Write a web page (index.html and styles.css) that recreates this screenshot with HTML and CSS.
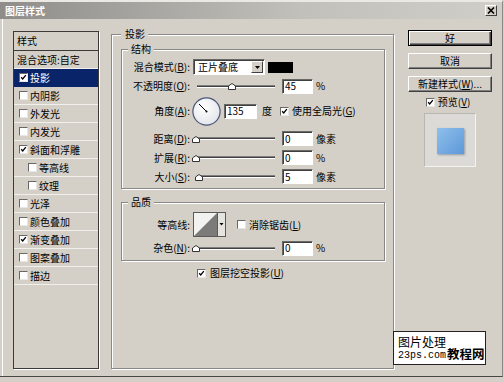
FILE: index.html
```html
<!DOCTYPE html>
<html lang="zh">

<head>
    <meta charset="UTF-8">
    <meta name="viewport" content="width=device-width, initial-scale=1.0">
    <title>图层样式</title>
    <link rel="stylesheet" href="styles.css">
</head>

<body>

    <div class="window">
        <div class="titlebar">
            <span class="title">图层样式</span>
            <span class="close">
                <svg width="8" height="7" viewBox="0 0 8 7"><path d="M1 0.5l6 6M7 0.5l-6 6" stroke="#000" stroke-width="1.6"/></svg>
            </span>
        </div>

        <div class="main">
            <div class="styles-list">
                <div class="list-head">样式</div>
                <div class="item">混合选项:自定</div>
                <div class="item check selected"><span class="cb on"><svg viewBox="0 0 9 9"><path d="M1.5 4.2l2 2.2 4-5" /></svg></span>投影</div>
                <div class="item check"><span class="cb"></span>内阴影</div>
                <div class="item check"><span class="cb"></span>外发光</div>
                <div class="item check"><span class="cb"></span>内发光</div>
                <div class="item check"><span class="cb on"><svg viewBox="0 0 9 9"><path d="M1.5 4.2l2 2.2 4-5" /></svg></span>斜面和浮雕</div>
                <div class="item check sub"><span class="cb"></span>等高线</div>
                <div class="item check sub"><span class="cb"></span>纹理</div>
                <div class="item check"><span class="cb"></span>光泽</div>
                <div class="item check"><span class="cb"></span>颜色叠加</div>
                <div class="item check"><span class="cb on"><svg viewBox="0 0 9 9"><path d="M1.5 4.2l2 2.2 4-5" /></svg></span>渐变叠加</div>
                <div class="item check"><span class="cb"></span>图案叠加</div>
                <div class="item check"><span class="cb"></span>描边</div>
            </div>

            <fieldset class="group outer">
                <legend>投影</legend>

                <fieldset class="group inner structure">
                    <legend>结构</legend>
                    <div class="row r-blend">
                        <span class="label">混合模式(<u>B</u>):</span>
                        <span class="select">正片叠底<span class="arrow"><svg width="5" height="3" viewBox="0 0 5 3"><path d="M0 0h5L2.5 3z" fill="#000"/></svg></span></span>
                        <span class="swatch"></span>
                    </div>
                    <div class="row r-opacity">
                        <span class="label">不透明度(<u>O</u>):</span>
                        <span class="slider"><span class="track"></span><svg class="thumb" style="left: 36px" width="8" height="7" viewBox="0 0 8 7"><path d="M0.5 6.5V3L4 0.5 7.5 3v3.5z" fill="#fff" stroke="#333"/></svg></span>
                        <span class="field">45</span>
                        <span class="unit">%</span>
                    </div>
                    <div class="row r-angle">
                        <span class="label">角度(<u>A</u>):</span>
                        <svg class="dial" width="29" height="29" viewBox="0 0 29 29">
                            <defs>
                                <radialGradient id="dialFill" cx="0.4" cy="0.35" r="0.7">
                                    <stop offset="0" stop-color="#ffffff"/>
                                    <stop offset="1" stop-color="#e2e4ea"/>
                                </radialGradient>
                            </defs>
                            <circle cx="14.5" cy="14.5" r="13.6" fill="url(#dialFill)" stroke="#4a5778" stroke-width="1.2"/>
                            <path d="M14.5 14.5L7 7" stroke="#000" stroke-width="1"/>
                            <circle cx="14.5" cy="14.5" r="1" fill="#000"/>
                        </svg>
                        <span class="field wide">135</span>
                        <span class="unit deg">度</span>
                        <span class="cb on global"><svg viewBox="0 0 9 9"><path d="M1.5 4.2l2 2.2 4-5" /></svg></span>
                        <span class="cb-text">使用全局光(<u>G</u>)</span>
                    </div>
                    <div class="row r-small first">
                        <span class="label">距离(<u>D</u>):</span>
                        <span class="slider"><span class="track"></span><svg class="thumb" style="left: 0px" width="8" height="7" viewBox="0 0 8 7"><path d="M0.5 6.5V3L4 0.5 7.5 3v3.5z" fill="#fff" stroke="#333"/></svg></span>
                        <span class="field">0</span>
                        <span class="unit">像素</span>
                    </div>
                    <div class="row r-small">
                        <span class="label">扩展(<u>R</u>):</span>
                        <span class="slider"><span class="track"></span><svg class="thumb" style="left: 0px" width="8" height="7" viewBox="0 0 8 7"><path d="M0.5 6.5V3L4 0.5 7.5 3v3.5z" fill="#fff" stroke="#333"/></svg></span>
                        <span class="field">0</span>
                        <span class="unit">%</span>
                    </div>
                    <div class="row r-small">
                        <span class="label">大小(<u>S</u>):</span>
                        <span class="slider"><span class="track"></span><svg class="thumb" style="left: 3px" width="8" height="7" viewBox="0 0 8 7"><path d="M0.5 6.5V3L4 0.5 7.5 3v3.5z" fill="#fff" stroke="#333"/></svg></span>
                        <span class="field">5</span>
                        <span class="unit">像素</span>
                    </div>
                </fieldset>

                <fieldset class="group inner quality">
                    <legend>品质</legend>
                    <div class="row r-contour">
                        <span class="label">等高线:</span>
                        <svg class="contour" width="33" height="25" viewBox="0 0 33 25">
                            <rect x="0.5" y="0.5" width="32" height="24" fill="#f2f2f0" stroke="#5a5a58"/>
                            <path d="M1 24L24 1V24z" fill="#7b7b79"/>
                            <path d="M24.5 1v23" stroke="#5a5a58"/>
                            <rect x="25" y="1" width="7" height="23" fill="#e6e4df"/>
                            <path d="M26.5 11h4l-2 2.5z" fill="#000"/>
                        </svg>
                        <span class="cb aa"></span>
                        <span class="cb-text">消除锯齿(<u>L</u>)</span>
                    </div>
                    <div class="row r-noise">
                        <span class="label">杂色(<u>N</u>):</span>
                        <span class="slider"><span class="track"></span><svg class="thumb" style="left: 0px" width="8" height="7" viewBox="0 0 8 7"><path d="M0.5 6.5V3L4 0.5 7.5 3v3.5z" fill="#fff" stroke="#333"/></svg></span>
                        <span class="field">0</span>
                        <span class="unit">%</span>
                    </div>
                </fieldset>

                <div class="row knockout">
                    <span class="cb on"><svg viewBox="0 0 9 9"><path d="M1.5 4.2l2 2.2 4-5" /></svg></span>
                    <span class="cb-text">图层挖空投影(<u>U</u>)</span>
                </div>
            </fieldset>

            <div class="side">
                <div class="btn default">好</div>
                <div class="btn">取消</div>
                <div class="btn">新建样式(<u>W</u>)...</div>
                <div class="preview-toggle">
                    <span class="cb on"><svg viewBox="0 0 9 9"><path d="M1.5 4.2l2 2.2 4-5" /></svg></span>
                    <span class="cb-text">预览(<u>V</u>)</span>
                </div>
                <div class="preview"><div class="preview-square"></div></div>
            </div>
        </div>

        <div class="watermark">
            <div class="wm-left">
                <div class="wm-top">图片处理</div>
                <div class="wm-url">23ps.com</div>
            </div>
            <div class="wm-big">教程网</div>
        </div>
    </div>

</body>

</html>
```

FILE: styles.css
```css
body {
    margin: 0;
    background-color: #d4d0c8;
    font-family: "Noto Sans CJK SC", "Noto Sans", sans-serif;
    font-size: 10px;
    line-height: 12px;
    color: #000;
}

u {
    text-decoration: underline;
    text-underline-offset: 1px;
}

.window {
    position: relative;
    width: 503px;
    height: 377px;
    box-sizing: border-box;
    border-top: 2px solid #ebe9e4;
    border-right: 1px solid #8a8884;
    border-bottom: 1px solid #4a4844;
    box-shadow: inset 2px 0 0 #d4d0c8, inset 3px 0 0 #fff;
    overflow: hidden;
}

/* title bar */
.titlebar {
    height: 17px;
    display: flex;
    align-items: center;
    justify-content: space-between;
    padding: 0 5px 0 5px;
    background: linear-gradient(to right, #8f8d89, #c2c0bb 60%, #d0cec8);
}

.title {
    color: #fff;
    font-weight: bold;
}

.close {
    width: 12px;
    height: 11px;
    box-sizing: border-box;
    display: flex;
    align-items: center;
    justify-content: center;
    background-color: #d4d0c8;
    border: 1px solid;
    border-color: #fff #404040 #404040 #fff;
}

.main {
    display: flex;
    align-items: flex-start;
}

/* left list */
.styles-list {
    flex: none;
    width: 86px;
    height: 338px;
    margin: 12px 0 0 13px;
    box-sizing: border-box;
    border: 1px solid #3c3a36;
    box-shadow: 1px 1px 0 #fff;
}

.list-head {
    height: 18px;
    display: flex;
    align-items: center;
    padding-left: 3px;
    border-bottom: 1px solid #3c3a36;
}

.item {
    height: 17px;
    display: flex;
    align-items: center;
    padding-left: 3px;
    border-bottom: 1px solid #f1f0ec;
    white-space: nowrap;
}

.item.check {
    padding-left: 5px;
}

.item.sub {
    padding-left: 14px;
}

.item.selected {
    background-color: #0a246a;
    color: #fff;
    border-bottom-color: #0a246a;
}

.item .cb {
    margin-right: 2px;
}

/* checkbox */
.cb {
    flex: none;
    width: 9px;
    height: 9px;
    box-sizing: border-box;
    background-color: #fff;
    border: 1px solid;
    border-color: #6a6864 #e8e6e2 #e8e6e2 #6a6864;
    display: inline-flex;
}

.cb svg {
    width: 7px;
    height: 7px;
}

.cb svg path {
    fill: none;
    stroke: #000;
    stroke-width: 1.7;
}

.cb-text {
    margin-left: 3px;
    white-space: nowrap;
}

/* group boxes */
.group {
    margin: 0;
    box-sizing: border-box;
    border: 1px solid #8a8884;
    box-shadow: 1px 1px 0 #fff, inset 1px 1px 0 #fff;
    min-inline-size: 0;
}

.group legend {
    padding: 0 3px;
    line-height: 12px;
    background-color: #d4d0c8;
}

.outer {
    flex: none;
    width: 283px;
    height: 341px;
    margin: 9px 0 0 12px;
    padding: 3px 8px 0 9px;
}

.outer > legend {
    padding-left: 4px;
}

.inner {
    padding: 3px 0 2px 6px;
}

.quality {
    margin-top: 7px;
}

.row {
    display: flex;
    align-items: center;
    height: 19px;
    white-space: nowrap;
}

.r-blend {
    height: 18px;
}

.r-opacity {
    height: 20px;
}

.r-angle {
    height: 30px;
}

.r-small.first {
    margin-top: 3px;
}

.r-contour {
    height: 27px;
}

.r-noise {
    height: 20px;
}

.label {
    flex: none;
    width: 62px;
    text-align: right;
}

/* controls */
.select {
    flex: none;
    margin-left: 3px;
    width: 72px;
    height: 16px;
    box-sizing: border-box;
    display: flex;
    align-items: center;
    padding: 0 1px 0 4px;
    background-color: #fff;
    border: 1px solid;
    border-color: #6a6864 #fff #fff #6a6864;
    box-shadow: inset 1px 1px 0 #404040;
}

.select .arrow {
    margin-left: auto;
    width: 12px;
    height: 12px;
    box-sizing: border-box;
    display: flex;
    align-items: center;
    justify-content: center;
    background-color: #d4d0c8;
    border: 1px solid;
    border-color: #fff #404040 #404040 #fff;
}

.swatch {
    flex: none;
    margin-left: 3px;
    width: 25px;
    height: 11px;
    background-color: #000;
}

.slider {
    position: relative;
    flex: none;
    margin-left: 2px;
    width: 83px;
    height: 16px;
    box-sizing: border-box;
    padding-left: 5px;
    display: flex;
    align-items: center;
}

.track {
    flex: 1;
    height: 1px;
    background-color: #404040;
    border-top: 1px solid #808080;
    border-bottom: 1px solid #fff;
}

.thumb {
    position: absolute;
    top: 5px;
}

.field {
    flex: none;
    margin-left: 7px;
    width: 31px;
    height: 15px;
    box-sizing: border-box;
    padding-left: 2px;
    display: flex;
    align-items: center;
    background-color: #fff;
    border: 1px solid;
    border-color: #6a6864 #fff #fff #6a6864;
    box-shadow: inset 1px 1px 0 #404040;
}

.unit {
    margin-left: 3px;
}

.dial {
    flex: none;
    margin-left: 2px;
}

.field.wide {
    margin-left: 3px;
    width: 33px;
}

.unit.deg {
    margin-left: 5px;
}

.cb.global {
    margin-left: 8px;
}

.contour {
    flex: none;
    margin-left: 3px;
}

.cb.aa {
    margin-left: 11px;
}

.knockout {
    height: 18px;
    margin-top: 3px;
    padding-left: 76px;
}

.knockout .cb-text {
    margin-left: 4px;
}

/* right side */
.side {
    flex: none;
    width: 84px;
    margin: 11px 0 0 14px;
    display: flex;
    flex-direction: column;
}

.btn {
    height: 16px;
    margin-bottom: 7px;
    box-sizing: border-box;
    display: flex;
    align-items: center;
    justify-content: center;
    border: 1px solid;
    border-color: #fff #404040 #404040 #fff;
    box-shadow: inset -1px -1px 0 #808080;
    white-space: nowrap;
}

.btn.default {
    border-color: #000;
    box-shadow: inset 1px 1px 0 #fff, inset -1px -1px 0 #404040, inset -2px -2px 0 #808080;
}

.preview-toggle {
    margin-top: -2px;
    height: 10px;
    display: flex;
    align-items: center;
    justify-content: center;
    padding-right: 4px;
}

.preview {
    margin: 6px auto 0;
    width: 52px;
    height: 54px;
    box-sizing: border-box;
    display: flex;
    align-items: center;
    justify-content: center;
    background-color: #dcdad6;
    border: 1px solid;
    border-color: #b8b6b1 #f4f3f0 #f4f3f0 #b8b6b1;
}

.preview-square {
    width: 27px;
    height: 26px;
    margin-top: 1px;
    background: linear-gradient(135deg, #8fc0ec, #5d98d8);
    box-shadow: 1px 1px 2px rgba(60, 80, 110, 0.45);
}

/* watermark */
.watermark {
    position: absolute;
    left: 393px;
    top: 329px;
    width: 93px;
    height: 34px;
    box-sizing: border-box;
    padding: 2px 0 0 4px;
    display: flex;
    background-color: #fff;
    border: 1px solid #222;
}

.wm-top {
    font-size: 12px;
    line-height: 15px;
}

.wm-url {
    font-family: "Liberation Mono", monospace;
    font-size: 10px;
    line-height: 13px;
}

.wm-big {
    align-self: flex-end;
    margin: 0 0 1px 1px;
    font-size: 12.5px;
    line-height: 18px;
    font-weight: bold;
}
```
